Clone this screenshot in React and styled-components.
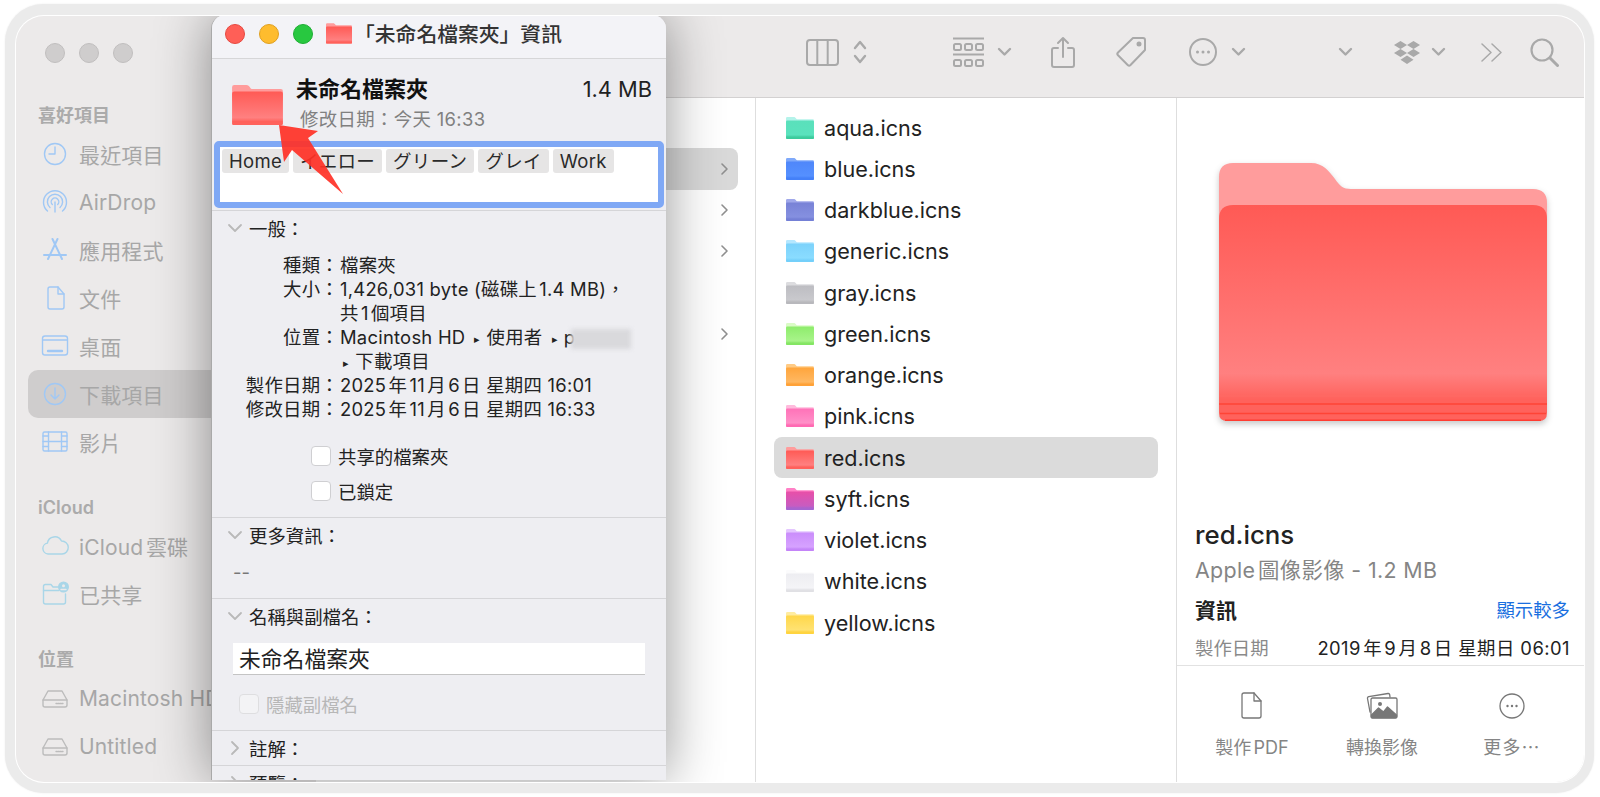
import React from 'react'
import styled, { createGlobalStyle } from 'styled-components'

const GlobalStyle = createGlobalStyle`
  html, body {
    margin: 0;
    height: 100%;
    background: #fff;
    overflow: hidden;
  }
  body {
    font-family: Inter, "Noto Sans CJK TC", sans-serif;
    text-autospace: normal;
  }
  * { box-sizing: border-box; }
`

const Frame = styled.div`
  width: 1589px;
  height: 789px;
  margin: 4px 0 0 5px;
  padding: 12px 10px 11px 11px;
  background: #ebebeb;
  border-radius: 38px;
  box-shadow: 0 0 2px #ebebeb;
`

const Window = styled.div`
  position: relative;
  display: flex;
  width: 100%;
  height: 100%;
  background: #eceaea;
  border-radius: 28px;
  overflow: hidden;
  box-shadow: 0 0 0 1px #fff;
`

/* sidebar */
const Sidebar = styled.aside`
  flex: none;
  width: 300px;
  padding-top: 27px;
`

const Lights = styled.div`
  display: flex;
  gap: ${(p) => p.$gap}px;
  padding-left: ${(p) => p.$left}px;
  margin-bottom: ${(p) => p.$bottom}px;
`

const Light = styled.span`
  width: 20px;
  height: 20px;
  border-radius: 50%;
  background: ${(p) => p.$color};
  border: 1px solid ${(p) => p.$edge};
`

const SideLabel = styled.div`
  height: 24px;
  margin: ${(p) => p.$top || 0}px 0 2px 22px;
  font-size: 18px;
  font-weight: 600;
  line-height: 24px;
  color: #ababab;
`

const SideItem = styled.div`
  display: flex;
  align-items: center;
  gap: 9px;
  height: 48px;
  margin-left: 12px;
  padding-left: 12px;
  border-radius: 10px;
  font-size: 21px;
  letter-spacing: 0.15px;
  color: #a7a7a7;
  white-space: nowrap;
  background: ${(p) => (p.$active ? '#cfcdcd' : 'transparent')};
`

const SideIcon = styled.svg`
  flex: none;
  width: 30px;
  height: 30px;
  fill: none;
  stroke: ${(p) => p.$color || '#a0c8f5'};
  stroke-width: 1.4;
  stroke-linecap: round;
  stroke-linejoin: round;
`

/* main area */
const Main = styled.main`
  flex: 1;
  min-width: 0;
  display: flex;
  flex-direction: column;
`

const Toolbar = styled.div`
  flex: none;
  display: flex;
  align-items: center;
  height: 82px;
  padding: 0 0 9px 490px;
  border-bottom: 1px solid #d3d1d1;
`

const Tool = styled.svg`
  flex: none;
  width: ${(p) => p.$w}px;
  height: ${(p) => p.$h}px;
  margin-left: ${(p) => p.$ml || 0}px;
  fill: none;
  stroke: #a9a9a9;
  stroke-width: 2;
  stroke-linecap: round;
  stroke-linejoin: round;
`

const Columns = styled.div`
  flex: 1;
  display: flex;
  min-height: 0;
  background: #fff;
`

const Column = styled.div`
  flex: none;
  width: ${(p) => p.$w}px;
  padding: 9px 0 0;
  border-right: 1px solid #dedede;
`

const HiddenRow = styled.div`
  display: flex;
  align-items: center;
  justify-content: flex-end;
  height: 41.25px;
  margin-right: 17px;
  padding-right: 9px;
  border-radius: 8px;
  background: ${(p) => (p.$active ? '#d9d9d9' : 'transparent')};
`

const RowChevron = styled.svg`
  width: 9px;
  height: 14px;
  fill: none;
  stroke: #8f8f8f;
  stroke-width: 1.6;
  stroke-linecap: round;
  stroke-linejoin: round;
`

const FileRow = styled.div`
  display: flex;
  align-items: center;
  gap: 10px;
  height: 41.25px;
  margin: 0 18px;
  padding-left: 12px;
  border-radius: 8px;
  font-size: 21.6px;
  color: #222;
  background: ${(p) => (p.$active ? '#dbdbdb' : 'transparent')};
`

const FolderSvg = styled.svg`
  flex: none;
  display: block;
  width: ${(p) => p.$w}px;
  height: ${(p) => p.$h}px;
`

const BigFolder = styled(FolderSvg)`
  margin: 65px 0 0 42px;
  filter: drop-shadow(0 3px 3px rgba(0, 0, 0, 0.22));
`

/* preview column */
const Preview = styled.section`
  flex: 1;
  display: flex;
  flex-direction: column;
  min-width: 0;
`

const PreviewText = styled.div`
  padding: 0 14px 0 18px;
`

const PreviewName = styled.div`
  margin-top: 99px;
  font-size: 25.8px;
  font-weight: 500;
  line-height: 30px;
  color: #222;
`

const PreviewKind = styled.div`
  margin-top: 7px;
  font-size: 21.4px;
  letter-spacing: 0.35px;
  line-height: 26px;
  color: #858585;
  white-space: nowrap;
`

const InfoHead = styled.div`
  display: flex;
  align-items: center;
  justify-content: space-between;
  margin-top: 13px;
  height: 26px;
`

const InfoTitle = styled.span`
  font-size: 21px;
  font-weight: 600;
  color: #222;
`

const MoreLink = styled.span`
  font-size: 18.4px;
  color: #1a6fe0;
`

const InfoRow = styled.div`
  display: flex;
  justify-content: space-between;
  margin-top: 14px;
  font-size: 18.4px;
  line-height: 24px;
  color: #222;
  white-space: nowrap;
`

const InfoKey = styled.span`
  color: #8a8a8a;
`

const InfoValue = styled.span`
  letter-spacing: 0.45px;
`

const Actions = styled.div`
  flex: 1;
  display: grid;
  grid-template-columns: repeat(3, 130px);
  margin-top: 5px;
  padding: 24px 0 0 10px;
  border-top: 1px solid #e2e2e2;
`

const Action = styled.div`
  display: flex;
  flex-direction: column;
  align-items: center;
  gap: 16px;
  font-size: 18px;
  letter-spacing: ${(p) => p.$spacing || 0}px;
  line-height: 24px;
  color: #858585;
`

const ActionIcon = styled.svg`
  width: 32px;
  height: 30px;
  fill: none;
  stroke: #777;
  stroke-width: 1.3;
  stroke-linecap: round;
  stroke-linejoin: round;
`

/* info panel */
const PanelWrap = styled.div`
  position: absolute;
  top: -1px;
  left: 0;
  right: 0;
  bottom: 0;
  pointer-events: none;
`

const Panel = styled.div`
  position: absolute;
  top: 0;
  left: 195px;
  width: 455px;
  height: 765px;
  overflow: hidden;
  background: #eeeef2;
  border-left: 1px solid #a9a9a9;
  border-radius: 14px 14px 0 0;
  box-shadow: 0 0 55px rgba(0, 0, 0, 0.42);
`

const TitleBar = styled.div`
  display: flex;
  align-items: flex-start;
  height: 44px;
  padding: 9px 0 0 13px;
  background: #f3f3f7;
  border-bottom: 1px solid #d6d6d8;
`

const TitleFolder = styled(FolderSvg)`
  margin: -1px 2px 0 13px;
`

const TitleText = styled.div`
  font-size: 20.8px;
  font-weight: 500;
  line-height: 21px;
  color: #333;
  white-space: nowrap;
`

const Header = styled.div`
  display: flex;
  height: 82px;
  padding: 17px 14px 0 20px;
`

const HeaderFolder = styled(FolderSvg)`
  margin: 9px 13px 0 0;
`

const HeaderText = styled.div`
  flex: 1;
`

const NameRow = styled.div`
  display: flex;
  justify-content: space-between;
  line-height: 26px;
`

const FileName = styled.span`
  font-size: 22px;
  font-weight: 600;
  color: #111;
`

const FileSize = styled.span`
  font-size: 21.8px;
  color: #222;
`

const Modified = styled.div`
  margin-top: 4px;
  padding-left: 4px;
  font-size: 18.4px;
  letter-spacing: 0.35px;
  line-height: 26px;
  color: #808080;
`

const TagField = styled.div`
  display: flex;
  gap: 4px;
  align-items: flex-start;
  height: 67px;
  margin: 0 2px 2px 2px;
  padding: 2px;
  background: #fff;
  border: 6px solid #7fa8f5;
  border-radius: 5px;
`

const Tag = styled.span`
  height: 24px;
  padding: 0 7px;
  border-radius: 3px;
  background: #e6e5e5;
  font-size: 18.5px;
  letter-spacing: 0.3px;
  line-height: 24px;
  color: #2a2a2a;
  white-space: nowrap;
`

const Section = styled.section`
  padding-bottom: ${(p) => p.$bottom || 0}px;
  border-top: 1px solid #d5d5d8;
`

const SectionHead = styled.div`
  display: flex;
  align-items: center;
  height: 34px;
  padding-left: 15px;
  font-size: 18.4px;
  color: #222;
`

const Caret = styled.svg`
  flex: none;
  width: 16px;
  height: 16px;
  margin-right: 6px;
  fill: none;
  stroke: #b9b9b9;
  stroke-width: 1.8;
  stroke-linecap: round;
  stroke-linejoin: round;
`

const Props = styled.dl`
  display: grid;
  grid-template-columns: 127px 1fr;
  grid-auto-rows: 24px;
  margin: 8px 0 0;
  font-size: 18.4px;
  letter-spacing: 0.25px;
  line-height: 24px;
  color: #222;
`

const PropKey = styled.dt`
  text-align: right;
  white-space: nowrap;
`

const PropValue = styled.dd`
  grid-column: 2;
  margin: 0;
  padding-left: 1px;
  white-space: nowrap;
`

const Blurred = styled.span`
  display: inline-block;
  width: 60px;
  height: 20px;
  margin-left: -4px;
  vertical-align: middle;
  background: #d9d9dc;
  filter: blur(2px);
`

const PathMark = styled.span`
  font-size: 11px;
  margin: 0 6px 0 ${(p) => (p.$lead ? 3 : 9)}px;
  vertical-align: 1px;
`

const Checks = styled.div`
  display: flex;
  flex-direction: column;
  gap: 15px;
  margin-top: 25px;
  padding-left: 99px;
`

const CheckRow = styled.label`
  display: flex;
  align-items: center;
  gap: 7px;
  height: 20px;
  font-size: 18.4px;
  color: ${(p) => (p.$disabled ? '#b7b7b7' : '#222')};
`

const Box = styled.span`
  flex: none;
  width: 20px;
  height: 20px;
  border-radius: 4px;
  border: 1px solid ${(p) => (p.$disabled ? '#dedee0' : '#cfcfd2')};
  background: ${(p) => (p.$disabled ? '#f3f3f5' : '#fff')};
`

const Dashes = styled.div`
  margin: 8px 0 0 21px;
  font-size: 18.4px;
  line-height: 24px;
  color: #777;
`

const NameInput = styled.div`
  height: 32px;
  margin: 10px 21px 0 21px;
  padding-left: 6px;
  background: #fff;
  border-bottom: 1px solid #c4c4c4;
  font-size: 21.8px;
  line-height: 32px;
  color: #222;
`

const HideExt = styled.div`
  margin: 19px 0 0 27px;
`

const Arrow = styled.svg`
  position: absolute;
  left: 262px;
  top: 110px;
  width: 90px;
  height: 90px;
`

const folderColors = {
  aqua: ['#b4f3ea', '#5ae0bb', '#5ae2bd', '#3ccb9c'],
  blue: ['#7fa9fa', '#4f87fa', '#5590ff', '#4480f8'],
  darkblue: ['#a0a8ea', '#7882d6', '#8590e0', '#7480d6'],
  generic: ['#b5e7ff', '#7cd2fb', '#8adcff', '#74d0fa'],
  gray: ['#dcdcdf', '#bdbdc2', '#c9c9cd', '#b8b8bd'],
  green: ['#dafbc6', '#8eec6c', '#a8f48a', '#84e564'],
  orange: ['#ffcb85', '#ffa53c', '#ffb862', '#ffa238'],
  pink: ['#ffbbdd', '#ff72b8', '#ff90c8', '#ff6ab3'],
  red: ['#ff9c9c', '#ff5a55', '#ff8080', '#ff625c'],
  syft: ['#ff80c6', '#e84fa8', '#c85cc0', '#a565d2'],
  violet: ['#e4c6ff', '#ca8dfb', '#d6a2ff', '#c484f8'],
  white: ['#fbfbfc', '#ededf1', '#f4f4f7', '#e0e0e4'],
  yellow: ['#ffeca0', '#ffd74a', '#ffe272', '#ffd43f'],
}

const files = [
  'aqua', 'blue', 'darkblue', 'generic', 'gray', 'green', 'orange',
  'pink', 'red', 'syft', 'violet', 'white', 'yellow',
]

const FolderArt = ({ name, id }) => {
  const [back, top, mid, bottom] = folderColors[name]
  const gid = `folder-${name}-${id}`
  return (
    <>
      <defs>
        <linearGradient id={gid} x1="0" y1="0" x2="0" y2="1">
          <stop offset="0" stopColor={top} />
          <stop offset="0.78" stopColor={mid} />
          <stop offset="0.9" stopColor={bottom} />
          <stop offset="1" stopColor={bottom} />
        </linearGradient>
      </defs>
      <path d="M14 0H92C104 0 110 8 116 16C121 23 124 26 132 26H314Q328 26 328 40V100H0V14Q0 0 14 0Z" fill={back} />
      <path d="M14 42H314Q328 42 328 56V250Q328 258 320 258H8Q0 258 0 250V56Q0 42 14 42Z" fill={`url(#${gid})`} />
    </>
  )
}

const Folder = ({ name, w, h, as: Comp = FolderSvg }) => (
  <Comp $w={w} $h={h} viewBox="0 0 328 258" aria-hidden="true">
    <FolderArt name={name} id={w} />
    <path d="M0 236H328" stroke={folderColors[name][1]} strokeOpacity="0.5" strokeWidth="3" />
  </Comp>
)

const BigRedFolder = () => (
  <BigFolder $w={328} $h={258} viewBox="0 0 328 258" aria-hidden="true">
    <FolderArt name="red" id="big" />
    <path d="M0 233H328" stroke="#ff6a64" strokeWidth="1" />
    <path d="M0 241H328M1 250.500H327" stroke="#ff4436" strokeWidth="1.600" />
    <path d="M6 257.200H322" stroke="#ff3b30" strokeWidth="1.600" />
  </BigFolder>
)

const Down = ({ ml }) => (
  <Tool $w={15} $h={10} $ml={ml} viewBox="0 0 15 10">
    <path d="M2 2l5.500 5.500L13 2" strokeWidth="2.400" />
  </Tool>
)

const Chevron = () => (
  <RowChevron viewBox="0 0 9 14"><path d="M2 2l5 5-5 5" /></RowChevron>
)

const CaretDown = () => (
  <Caret viewBox="0 0 16 16"><path d="M2 5l6 6 6-6" /></Caret>
)

const CaretRight = () => (
  <Caret viewBox="0 0 16 16"><path d="M5 2l6 6-6 6" /></Caret>
)

const Dots = ({ cx, cy, gap, r, color }) => (
  <g fill={color} stroke="none">
    <circle cx={cx - gap} cy={cy} r={r} />
    <circle cx={cx} cy={cy} r={r} />
    <circle cx={cx + gap} cy={cy} r={r} />
  </g>
)

const DriveIcon = () => (
  <SideIcon $color="#bcbcbc" viewBox="0 0 30 30">
    <path d="M8 8h14l5 9v5a2 2 0 0 1-2 2H5a2 2 0 0 1-2-2v-5z" />
    <path d="M3 17h24" />
    <path d="M16 20.500h7" strokeDasharray="1 1" />
  </SideIcon>
)

export default function App() {
  return (
    <>
      <GlobalStyle />
      <Frame>
        <Window>
          <Sidebar>
            <Lights $gap={14} $left={29} $bottom={41}>
              <Light $color="#cfcdcd" $edge="#c0bebe" />
              <Light $color="#cfcdcd" $edge="#c0bebe" />
              <Light $color="#cfcdcd" $edge="#c0bebe" />
            </Lights>

            <SideLabel>喜好項目</SideLabel>
            <SideItem>
              <SideIcon viewBox="0 0 30 30">
                <circle cx="15" cy="15" r="10.500" />
                <path d="M15 8v7H9" />
              </SideIcon>
              最近項目
            </SideItem>
            <SideItem>
              <SideIcon viewBox="0 0 30 30">
                <path d="M7.500 24A11.500 11.500 0 1 1 22.500 24" />
                <path d="M10 20.500A7.600 7.600 0 1 1 20 20.500" />
                <path d="M12.300 17.500A3.800 3.800 0 1 1 17.700 17.500" />
                <path d="M15 15v10" />
              </SideIcon>
              AirDrop
            </SideItem>
            <SideItem>
              <SideIcon viewBox="0 0 30 30">
                <path d="M12.500 4L22 24M17.500 4L8 24M4 20h22" strokeWidth="2" />
              </SideIcon>
              應用程式
            </SideItem>
            <SideItem>
              <SideIcon viewBox="0 0 30 30">
                <path d="M10 4h8l6 7v13a2 2 0 0 1-2 2H10a2 2 0 0 1-2-2V6a2 2 0 0 1 2-2z" />
                <path d="M18 4v7h6" />
              </SideIcon>
              文件
            </SideItem>
            <SideItem>
              <SideIcon viewBox="0 0 30 30">
                <rect x="2.500" y="5" width="25" height="19" rx="2.500" />
                <path d="M3 9h24" />
                <path d="M8 20h14" strokeWidth="2.400" />
              </SideIcon>
              桌面
            </SideItem>
            <SideItem $active>
              <SideIcon viewBox="0 0 30 30">
                <circle cx="15" cy="15" r="10.500" />
                <path d="M15 9v11M11 16l4 4 4-4" />
              </SideIcon>
              下載項目
            </SideItem>
            <SideItem>
              <SideIcon viewBox="0 0 30 30">
                <rect x="3" y="5" width="24" height="19" rx="1.500" />
                <path d="M8.500 5v19M21.500 5v19M8.500 14.500h13" />
                <path d="M3 9h5.500M3 14.500h5.500M3 19.500h5.500M21.500 9H27M21.500 14.500H27M21.500 19.500H27" />
              </SideIcon>
              影片
            </SideItem>

            <SideLabel $top={30}>iCloud</SideLabel>
            <SideItem>
              <SideIcon $color="#a9d6e8" viewBox="0 0 30 30">
                <path d="M8 23a5.500 5.500 0 0 1-.6-10.900A7.500 7.500 0 0 1 21.500 10a6.500 6.500 0 0 1 .5 13z" />
              </SideIcon>
              iCloud雲碟
            </SideItem>
            <SideItem>
              <SideIcon $color="#a9d6e8" viewBox="0 0 30 30">
                <path d="M18 8H13l-2-2.500H5.500A2 2 0 0 0 3.500 7.500V23a2 2 0 0 0 2 2h18a2 2 0 0 0 2-2v-8" />
                <path d="M3.500 11.500H19" />
                <circle cx="23.500" cy="8" r="4.800" fill="#a9d6e8" />
                <circle cx="23.500" cy="6.800" r="1.500" fill="#eceaea" stroke="none" />
                <path d="M21 10.500h5" stroke="#eceaea" strokeWidth="1.400" />
              </SideIcon>
              已共享
            </SideItem>

            <SideLabel $top={30}>位置</SideLabel>
            <SideItem>
              <DriveIcon />
              Macintosh HD
            </SideItem>
            <SideItem>
              <DriveIcon />
              Untitled
            </SideItem>
          </Sidebar>

          <Main>
            <Toolbar>
              <Tool $w={33} $h={27} viewBox="0 0 33 27">
                <rect x="1" y="1" width="31" height="25" rx="3" />
                <path d="M11.300 1v25M21.700 1v25" />
              </Tool>
              <Tool $w={14} $h={26} $ml={14} viewBox="0 0 14 26">
                <path d="M2 9l5-6 5 6M2 17l5 6 5-6" strokeWidth="2.400" />
              </Tool>
              <Tool $w={31} $h={31} $ml={86} viewBox="0 0 31 31">
                <path d="M0 1.500h31M0 17.500h31" />
                <rect x="1" y="7" width="7" height="6" rx="1.500" />
                <rect x="12" y="7" width="7" height="6" rx="1.500" />
                <rect x="23" y="7" width="7" height="6" rx="1.500" />
                <rect x="1" y="23" width="7" height="6" rx="1.500" />
                <rect x="12" y="23" width="7" height="6" rx="1.500" />
                <rect x="23" y="23" width="7" height="6" rx="1.500" />
              </Tool>
              <Down ml={13} />
              <Tool $w={24} $h={32} $ml={39} viewBox="0 0 24 32">
                <path d="M7 12H3a2 2 0 0 0-2 2v15a2 2 0 0 0 2 2h18a2 2 0 0 0 2-2V14a2 2 0 0 0-2-2h-4" />
                <path d="M12 21V2M7 7l5-5 5 5" />
              </Tool>
              <Tool $w={32} $h={32} $ml={40} viewBox="0 0 32 32">
                <path d="M18 2h10a2 2 0 0 1 2 2v10L15.500 29a2 2 0 0 1-2.800 0L3 19.300a2 2 0 0 1 0-2.800z" />
                <circle cx="24" cy="8" r="1.500" fill="#a9a9a9" />
              </Tool>
              <Tool $w={28} $h={28} $ml={42} viewBox="0 0 28 28">
                <circle cx="14" cy="14" r="13" />
                <Dots cx={14} cy={14} gap={5.500} r={1.500} color="#a9a9a9" />
              </Tool>
              <Down ml={14} />
              <Down ml={92} />
              <Tool $w={26} $h={23} $ml={41} viewBox="0 0 26 23">
                <path
                  fill="#a9a9a9"
                  stroke="none"
                  d="M6.500 0L13 4 6.500 8 0 4zM19.500 0L26 4l-6.500 4L13 4zM6.500 8L13 12l-6.500 4L0 12zM19.500 8L26 12l-6.500 4L13 12zM13 14.500l6.500 4.200L13 23l-6.500-4.300z"
                />
              </Tool>
              <Down ml={11} />
              <Tool $w={21} $h={19} $ml={35} viewBox="0 0 21 19">
                <path d="M1 1l9 8.500-9 8.500M11 1l9 8.500-9 8.500" strokeWidth="1.500" />
              </Tool>
              <Tool $w={29} $h={29} $ml={28} viewBox="0 0 29 29">
                <circle cx="12" cy="12" r="10.500" strokeWidth="2.200" />
                <path d="M20 20l7.500 7.500" strokeWidth="3" />
              </Tool>
            </Toolbar>

            <Columns>
              <Column $w={440}>
                <HiddenRow />
                <HiddenRow $active><Chevron /></HiddenRow>
                <HiddenRow><Chevron /></HiddenRow>
                <HiddenRow><Chevron /></HiddenRow>
                <HiddenRow />
                <HiddenRow><Chevron /></HiddenRow>
              </Column>

              <Column $w={421}>
                {files.map((name) => (
                  <FileRow key={name} $active={name === 'red'}>
                    <Folder name={name} w={28} h={22} />
                    {name}.icns
                  </FileRow>
                ))}
              </Column>

              <Preview>
                <BigRedFolder />
                <PreviewText>
                  <PreviewName>red.icns</PreviewName>
                  <PreviewKind>Apple圖像影像 - 1.2 MB</PreviewKind>
                  <InfoHead>
                    <InfoTitle>資訊</InfoTitle>
                    <MoreLink>顯示較多</MoreLink>
                  </InfoHead>
                  <InfoRow>
                    <InfoKey>製作日期</InfoKey>
                    <InfoValue>2019年9月8日 星期日 06:01</InfoValue>
                  </InfoRow>
                </PreviewText>
                <Actions>
                  <Action>
                    <ActionIcon viewBox="0 0 32 30">
                      <path d="M8 3h10l7 8v15a2 2 0 0 1-2 2H8a2 2 0 0 1-2-2V5a2 2 0 0 1 2-2z" />
                      <path d="M18 3v8h7" />
                    </ActionIcon>
                    製作PDF
                  </Action>
                  <Action>
                    <ActionIcon viewBox="0 0 32 30">
                      <path d="M4 22L1.500 8.500a1.500 1.500 0 0 1 1.200-1.800L22 3.500a1.500 1.500 0 0 1 1.700 1.200L24 7" />
                      <rect x="5" y="8" width="26" height="20" rx="1.500" />
                      <path d="M5.500 27.500V25l7-7 5 4 4-5 9 8v2.500z" fill="#777" />
                      <circle cx="14" cy="14" r="2" fill="#777" stroke="none" />
                    </ActionIcon>
                    轉換影像
                  </Action>
                  <Action $spacing={1.2}>
                    <ActionIcon viewBox="0 0 32 30">
                      <circle cx="16" cy="16" r="12" />
                      <Dots cx={16} cy={16} gap={4.500} r={1.200} color="#777" />
                    </ActionIcon>
                    更多⋯
                  </Action>
                </Actions>
              </Preview>
            </Columns>
          </Main>

          <PanelWrap>
            <Panel>
              <TitleBar>
                <Lights $gap={14} $left={0} $bottom={0}>
                  <Light $color="#ff5f57" $edge="#e5483f" />
                  <Light $color="#febc2e" $edge="#e0a020" />
                  <Light $color="#28c840" $edge="#1fae34" />
                </Lights>
                <Folder name="red" w={26} h={21} as={TitleFolder} />
                <TitleText>「未命名檔案夾」資訊</TitleText>
              </TitleBar>

              <Header>
                <Folder name="red" w={51} h={40} as={HeaderFolder} />
                <HeaderText>
                  <NameRow>
                    <FileName>未命名檔案夾</FileName>
                    <FileSize>1.4 MB</FileSize>
                  </NameRow>
                  <Modified>修改日期：今天 16:33</Modified>
                </HeaderText>
              </Header>

              <TagField>
                <Tag>Home</Tag>
                <Tag>イエロー</Tag>
                <Tag>グリーン</Tag>
                <Tag>グレイ</Tag>
                <Tag>Work</Tag>
              </TagField>

              <Section $bottom={16}>
                <SectionHead><CaretDown />一般：</SectionHead>
                <Props>
                  <PropKey>種類：</PropKey>
                  <PropValue>檔案夾</PropValue>
                  <PropKey>大小：</PropKey>
                  <PropValue>1,426,031 byte (磁碟上1.4 MB)，</PropValue>
                  <PropValue>共1個項目</PropValue>
                  <PropKey>位置：</PropKey>
                  <PropValue>
                    Macintosh HD<PathMark>▸</PathMark>使用者<PathMark>▸</PathMark>p<Blurred />
                  </PropValue>
                  <PropValue><PathMark $lead>▸</PathMark>下載項目</PropValue>
                  <PropKey>製作日期：</PropKey>
                  <PropValue>2025年11月6日 星期四 16:01</PropValue>
                  <PropKey>修改日期：</PropKey>
                  <PropValue>2025年11月6日 星期四 16:33</PropValue>
                </Props>
                <Checks>
                  <CheckRow><Box />共享的檔案夾</CheckRow>
                  <CheckRow><Box />已鎖定</CheckRow>
                </Checks>
              </Section>

              <Section $bottom={14}>
                <SectionHead><CaretDown />更多資訊：</SectionHead>
                <Dashes>--</Dashes>
              </Section>

              <Section $bottom={16}>
                <SectionHead><CaretDown />名稱與副檔名：</SectionHead>
                <NameInput>未命名檔案夾</NameInput>
                <HideExt>
                  <CheckRow $disabled><Box $disabled />隱藏副檔名</CheckRow>
                </HideExt>
              </Section>

              <Section>
                <SectionHead><CaretRight />註解：</SectionHead>
              </Section>

              <Section>
                <SectionHead><CaretRight />預覽：</SectionHead>
              </Section>
            </Panel>

            <Arrow viewBox="0 0 90 90" aria-hidden="true">
              <path
                d="M1 0L40 6 30 13 65 69 14 25 6 37z"
                fill="#ff3126"
                fillOpacity="0.92"
              />
            </Arrow>
          </PanelWrap>
        </Window>
      </Frame>
    </>
  )
}
